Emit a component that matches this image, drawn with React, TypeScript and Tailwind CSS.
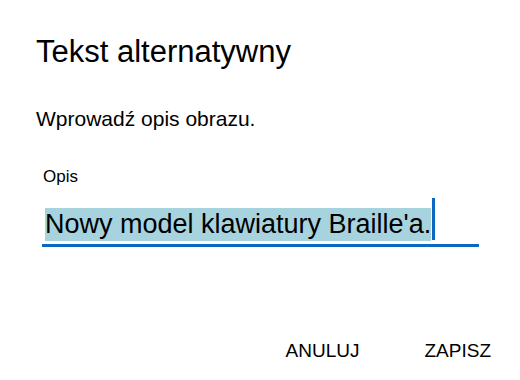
export default function App() {
  return (
    <div
      className="flex h-[380px] w-[520px] flex-col bg-white pl-[36px] pt-[33px] text-black"
      style={{ fontFamily: '"Liberation Sans", Arial, sans-serif' }}
    >
      <h1 className="text-[31px] leading-[37px]">Tekst alternatywny</h1>

      <p className="mt-[35px] text-[21px] leading-[28px]">Wprowadź opis obrazu.</p>

      <label className="ml-[7px] mt-[32px] text-[17px] leading-[24px]">Opis</label>

      {/* text field with selected text + caret */}
      <div className="ml-[6px] mt-[9px] flex w-[437px] items-end border-b-[3px] border-[#0a68c2] pb-[3px] pl-[3px]">
        <span className="h-[33px] whitespace-nowrap bg-[#a7d3df] text-[27px] leading-[33px]">
          Nowy model klawiatury Braille&apos;a.
        </span>
        <span className="mb-[1px] ml-[1px] h-[42px] w-[3px] bg-[#0a68c2]" />
      </div>

      <div className="mt-[92px] flex justify-end gap-[65px] pr-[29px] text-[19px] leading-[24px]">
        <button className="uppercase">Anuluj</button>
        <button className="uppercase">Zapisz</button>
      </div>
    </div>
  );
}
